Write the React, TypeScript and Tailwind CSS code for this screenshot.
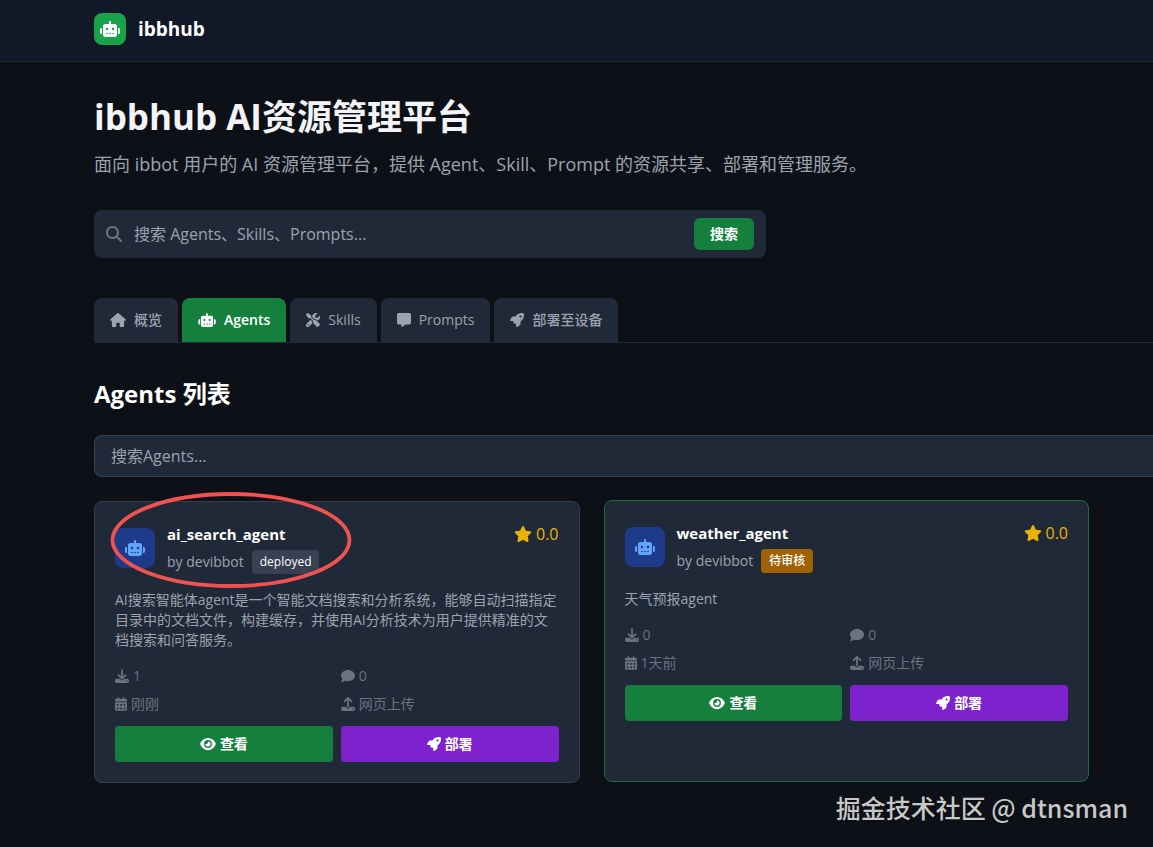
import { useState } from 'react';
import type { ReactNode } from 'react';
import {
  FaCalendarDays,
  FaComment,
  FaDownload,
  FaEye,
  FaHouse,
  FaMagnifyingGlass,
  FaMessage,
  FaRobot,
  FaRocket,
  FaScrewdriverWrench,
  FaStar,
  FaUpload,
} from 'react-icons/fa6';

type Agent = {
  name: string;
  author: string;
  status: 'deployed' | '待审核';
  rating: string;
  description: string;
  downloads: number;
  comments: number;
  updated: string;
  source: string;
  active?: boolean;
  marked?: boolean;
};

const agents: Agent[] = [
  {
    name: 'ai_search_agent',
    author: 'devibbot',
    status: 'deployed',
    rating: '0.0',
    description:
      'AI搜索智能体agent是一个智能文档搜索和分析系统，能够自动扫描指定目录中的文档文件，构建缓存，并使用AI分析技术为用户提供精准的文档搜索和问答服务。',
    downloads: 1,
    comments: 0,
    updated: '刚刚',
    source: '网页上传',
    marked: true,
  },
  {
    name: 'weather_agent',
    author: 'devibbot',
    status: '待审核',
    rating: '0.0',
    description: '天气预报agent',
    downloads: 0,
    comments: 0,
    updated: '1天前',
    source: '网页上传',
    active: true,
  },
];

const tabs = [
  { id: 'overview', label: '概览', icon: <FaHouse className="h-3.5 w-4" /> },
  { id: 'agents', label: 'Agents', icon: <FaRobot className="h-3.5 w-[18px]" /> },
  { id: 'skills', label: 'Skills', icon: <FaScrewdriverWrench className="size-3.5" /> },
  { id: 'prompts', label: 'Prompts', icon: <FaMessage className="size-3.5" /> },
  { id: 'deploy', label: '部署至设备', icon: <FaRocket className="size-3.5" /> },
];

function Stat({ icon, children }: { icon: ReactNode; children: ReactNode }) {
  return (
    <div className="flex items-center gap-1">
      {icon}
      <span>{children}</span>
    </div>
  );
}

function AgentCard({ agent }: { agent: Agent }) {
  return (
    <article
      className={`relative rounded-lg border bg-[#1f2937] p-5 ${
        agent.active ? '-translate-y-px border-[#1f6b3a]' : 'border-[#333f4d]'
      }`}
    >
      {/* Title row */}
      <div className="flex items-start justify-between">
        <div className="flex items-center gap-3">
          <div className="flex size-10 items-center justify-center rounded-lg bg-[#1e3a8a] text-[#60a5fa]">
            <FaRobot className="h-4 w-5" />
          </div>
          <div>
            <h3 className="text-[15px] leading-6 font-bold text-white">{agent.name}</h3>
            <div className="mt-1 flex h-6 items-center gap-2">
              <span className="text-sm text-[#9ca3af]">by {agent.author}</span>
              <span
                className={`rounded px-2 py-1 text-xs font-medium text-white ${
                  agent.status === 'deployed' ? 'bg-[#374151]' : 'bg-[#a16207]'
                }`}
              >
                {agent.status}
              </span>
            </div>
          </div>
        </div>
        <div className="flex items-center gap-1 text-[#eab308]">
          <FaStar className="h-4 w-[18px]" />
          <span className="text-base leading-6">{agent.rating}</span>
        </div>
      </div>

      <p className="mt-4 text-sm text-[#9ca3af]">{agent.description}</p>

      <div className="mt-4 grid grid-cols-2 gap-2 text-sm text-[#6b7280]">
        <Stat icon={<FaDownload className="size-3.5" />}>{agent.downloads}</Stat>
        <Stat icon={<FaComment className="size-3.5" />}>{agent.comments}</Stat>
        <Stat icon={<FaCalendarDays className="h-3.5 w-3" />}>{agent.updated}</Stat>
        <Stat icon={<FaUpload className="size-3.5" />}>{agent.source}</Stat>
      </div>

      <div className="mt-3 grid grid-cols-2 gap-2 text-sm font-semibold text-white">
        <button type="button" className="flex h-9 items-center justify-center gap-1 rounded bg-[#15803d]">
          <FaEye className="h-3.5 w-4" />
          查看
        </button>
        <button type="button" className="flex h-9 items-center justify-center gap-1 rounded bg-[#7e22ce]">
          <FaRocket className="size-3.5" />
          部署
        </button>
      </div>

      {agent.marked && (
        <svg
          className="pointer-events-none absolute -top-3 left-3.5 h-25 w-61"
          viewBox="0 0 244 100"
          fill="none"
          aria-hidden="true"
        >
          <ellipse cx="122" cy="50" rx="118.5" ry="46" stroke="#f05252" strokeWidth="3.8" />
        </svg>
      )}
    </article>
  );
}

export default function App() {
  const [tab, setTab] = useState('agents');

  return (
    <div className="relative min-h-screen overflow-hidden bg-[#0d1117] font-['Open_Sans','Noto_Sans_CJK_SC',sans-serif] text-white">
      {/* Header */}
      <header className="border-b border-[#1f2937] bg-[#111827] px-[94px]">
        <div className="flex h-[61px] items-center gap-3 pb-1">
          <div className="flex size-8 items-center justify-center rounded-lg bg-[#16a34a]">
            <FaRobot className="h-4 w-5" />
          </div>
          <span className="text-[19px] leading-7 font-bold">ibbhub</span>
        </div>
      </header>

      <main className="py-8 pl-[94px]">
        <h1 className="text-[35px] leading-[46px] font-bold text-[#f3f4f6]">ibbhub AI资源管理平台</h1>
        <p className="mt-2.5 text-lg text-[#9ca3af]">
          面向 ibbot 用户的 AI 资源管理平台，提供 Agent、Skill、Prompt 的资源共享、部署和管理服务。
        </p>

        <form
          className="mt-8 flex h-12 max-w-2xl items-center rounded-lg bg-[#1f2937] px-3"
          onSubmit={(e) => e.preventDefault()}
        >
          <FaMagnifyingGlass className="size-4 text-[#6b7280]" />
          <input
            type="text"
            aria-label="搜索"
            placeholder="搜索 Agents、Skills、Prompts..."
            className="ml-3 flex-1 text-base outline-none placeholder:text-[#9ca3af]"
          />
          <button type="submit" className="h-8 rounded-md bg-[#15803d] px-4 text-sm font-semibold">
            搜索
          </button>
        </form>

        {/* Tabs */}
        <nav className="mt-10 flex gap-1 border-b border-[#1f2937]">
          {tabs.map((t) => (
            <button
              key={t.id}
              type="button"
              onClick={() => setTab(t.id)}
              className={`flex h-11 items-center gap-2 rounded-t-lg px-4 text-sm ${
                tab === t.id ? 'bg-[#15803d] font-semibold text-white' : 'bg-[#1f2937] font-medium text-[#9ca3af]'
              }`}
            >
              {t.icon}
              {t.label}
            </button>
          ))}
        </nav>

        <h2 className="mt-[35px] text-2xl font-bold">Agents 列表</h2>
        <input
          type="text"
          aria-label="搜索Agents"
          placeholder="搜索Agents..."
          className="mt-[25px] block h-[42px] w-full rounded-l-lg border border-r-0 border-[#374151] bg-[#1f2937] px-4 text-base outline-none placeholder:text-[#9ca3af]"
        />

        <div className="mt-6 mr-16 grid grid-cols-2 gap-6">
          {agents.map((a) => (
            <AgentCard key={a.name} agent={a} />
          ))}
        </div>
      </main>

      <div className="absolute right-[25px] bottom-[22px] font-['Noto_Sans_CJK_SC',sans-serif] text-[25px] leading-9 font-medium text-[#c8c8c8] text-shadow-sm">
        掘金技术社区 @ dtnsman
      </div>
    </div>
  );
}
